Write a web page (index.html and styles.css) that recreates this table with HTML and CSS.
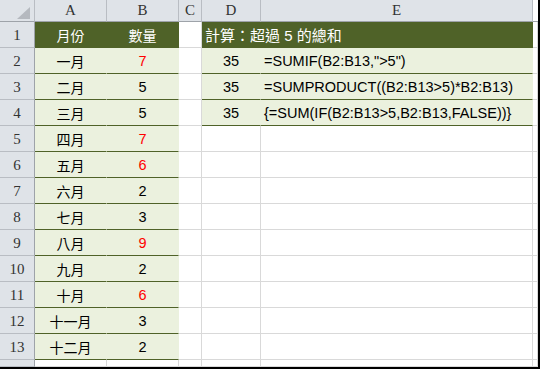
FILE: index.html
```html
<!DOCTYPE html>
<html lang="zh-Hant">
<head>
<meta charset="utf-8">
<title>超過 5 的總和</title>
<link rel="stylesheet" href="styles.css">
</head>
<body>
<div class="sheet">
  <div class="ch corner"><span class="tri"></span></div>
  <div class="ch">A</div><div class="ch">B</div><div class="ch">C</div><div class="ch">D</div><div class="ch">E</div><div class="ch end"></div>

  <div class="rh">1</div>
  <div class="c hd ctr cj">月份</div><div class="c hd ctr cj">數量</div><div class="c"></div>
  <div class="c hd span2 title">計算：超過 5 的總和</div><div class="c"></div>

  <div class="rh">2</div>
  <div class="c g ctr cj">一月</div><div class="c g ctr red">7</div><div class="c"></div>
  <div class="c g ctr">35</div><div class="c g f">=SUMIF(B2:B13,"&gt;5")</div><div class="c"></div>

  <div class="rh">3</div>
  <div class="c g ctr cj">二月</div><div class="c g ctr">5</div><div class="c"></div>
  <div class="c g ctr">35</div><div class="c g f">=SUMPRODUCT((B2:B13&gt;5)*B2:B13)</div><div class="c"></div>

  <div class="rh">4</div>
  <div class="c g ctr cj">三月</div><div class="c g ctr">5</div><div class="c"></div>
  <div class="c g ctr">35</div><div class="c g f">{=SUM(IF(B2:B13&gt;5,B2:B13,FALSE))}</div><div class="c"></div>

  <div class="rh">5</div>
  <div class="c g ctr cj">四月</div><div class="c g ctr red">7</div><div class="c"></div><div class="c"></div><div class="c"></div><div class="c"></div>

  <div class="rh">6</div>
  <div class="c g ctr cj">五月</div><div class="c g ctr red">6</div><div class="c"></div><div class="c"></div><div class="c"></div><div class="c"></div>

  <div class="rh">7</div>
  <div class="c g ctr cj">六月</div><div class="c g ctr">2</div><div class="c"></div><div class="c"></div><div class="c"></div><div class="c"></div>

  <div class="rh">8</div>
  <div class="c g ctr cj">七月</div><div class="c g ctr">3</div><div class="c"></div><div class="c"></div><div class="c"></div><div class="c"></div>

  <div class="rh">9</div>
  <div class="c g ctr cj">八月</div><div class="c g ctr red">9</div><div class="c"></div><div class="c"></div><div class="c"></div><div class="c"></div>

  <div class="rh">10</div>
  <div class="c g ctr cj">九月</div><div class="c g ctr">2</div><div class="c"></div><div class="c"></div><div class="c"></div><div class="c"></div>

  <div class="rh">11</div>
  <div class="c g ctr cj">十月</div><div class="c g ctr red">6</div><div class="c"></div><div class="c"></div><div class="c"></div><div class="c"></div>

  <div class="rh">12</div>
  <div class="c g ctr cj">十一月</div><div class="c g ctr">3</div><div class="c"></div><div class="c"></div><div class="c"></div><div class="c"></div>

  <div class="rh">13</div>
  <div class="c g ctr cj">十二月</div><div class="c g ctr">2</div><div class="c"></div><div class="c"></div><div class="c"></div><div class="c"></div>

  <div class="rh"></div>
  <div class="c"></div><div class="c"></div><div class="c"></div><div class="c"></div><div class="c"></div><div class="c"></div>
</div>
</body>
</html>
```

FILE: styles.css
```css
* { box-sizing: border-box; }
html, body { margin: 0; padding: 0; background: #fff; }

.sheet {
  width: 540px;
  height: 369px;
  border-right: 2px solid #000;
  border-bottom: 2px solid #000;
  overflow: hidden;
  display: grid;
  grid-template-columns: 35px 72px 72px 23px 59px 272px 1fr;
  grid-template-rows: 22px repeat(13, 26px) 1fr;
  font-family: "Liberation Sans", "Noto Sans CJK TC", sans-serif;
  font-size: 14.5px;
  color: #000;
}

.ch, .rh {
  background: #dfe3e8;
  font-family: "Liberation Serif", "Noto Sans CJK TC", serif;
  font-size: 15px;
  color: #333;
  display: flex;
  align-items: center;
  justify-content: center;
}
.ch {
  border-right: 1px solid #b9bdc3;
  border-bottom: 1px solid #9ea3a9;
}
.rh {
  border-right: 1px solid #9ea3a9;
  border-bottom: 1px solid #b9bdc3;
  padding-top: 2px;
}
.ch.end { background: #fff; border-right: none; }

.corner { position: relative; }
.tri {
  position: absolute;
  right: 4px;
  bottom: 2px;
  width: 0;
  height: 0;
  border-left: 13px solid transparent;
  border-bottom: 12px solid #b5b9bf;
}

.c {
  border-right: 1px solid #d9d9d9;
  border-bottom: 1px solid #d9d9d9;
  display: flex;
  align-items: center;
  white-space: nowrap;
  background: #fff;
}
.ctr { justify-content: center; }

.hd {
  background: #4f6228;
  border-right-color: #4f6228;
  border-bottom-color: #4f6228;
  color: #fff;
  font-size: 15px;
}
.title { justify-content: flex-start; padding-left: 3px; }
.span2 { grid-column: span 2; }

.g {
  background: #ebf1de;
  border-right-color: #ebf1de;
  border-bottom-color: #4f6228;
  font-size: 14.5px;
}
.c.cj { font-size: 14px; }
.f { padding-left: 3px; }
.red { color: #ff0000; }
```
